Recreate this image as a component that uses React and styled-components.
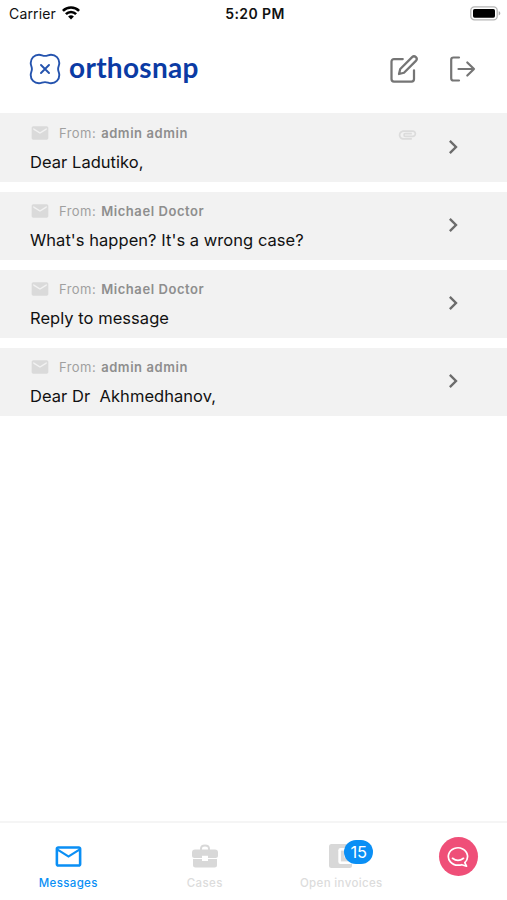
import React from 'react'
import styled, { createGlobalStyle } from 'styled-components'
import { FiEdit } from 'react-icons/fi'
import { MdEmail, MdMailOutline, MdChevronRight, MdAttachment } from 'react-icons/md'

const messages = [
  { id: 1, from: 'admin admin', subject: 'Dear Ladutiko,', attachment: true },
  { id: 2, from: 'Michael Doctor', subject: "What's happen? It's a wrong case?" },
  { id: 3, from: 'Michael Doctor', subject: 'Reply to message' },
  { id: 4, from: 'admin admin', subject: 'Dear Dr  Akhmedhanov,' },
]

const WifiIcon = () => (
  <svg width="18" height="14" viewBox="0 0 18 14" fill="none" stroke="#000" strokeWidth="2.6">
    <path d="M0.9 4.9a11.5 11.5 0 0 1 16.2 0" />
    <path d="M3.9 8.1a7.2 7.2 0 0 1 10.2 0" />
    <path d="M9 13.6 6.1 10.6a4.1 4.1 0 0 1 5.8 0z" fill="#000" stroke="none" />
  </svg>
)

const BatteryIcon = () => (
  <svg width="31" height="15" viewBox="0 0 31 15">
    <rect x="0.8" y="0.8" width="26.4" height="13" rx="3.6" fill="#fff" stroke="#b5b5b5" strokeWidth="1.3" />
    <rect x="3" y="2.9" width="22" height="8.8" rx="1.6" fill="#000" />
    <path d="M28.7 5.2v4.2c1-.4 1.6-1.2 1.6-2.1s-.6-1.7-1.6-2.1z" fill="#aaa" />
  </svg>
)

const LogoMark = () => (
  <svg width="32" height="32" viewBox="0 0 32 32" fill="none" stroke="#2453ae" strokeLinecap="round">
    <path
      d="M10 1.7C12.500 1.7 13.500 2.900 16 2.900S19.500 1.7 22 1.7C26.8 1.7 30.3 5.200 30.3 10C30.3 12.500 29.100 13.500 29.100 16S30.3 19.500 30.3 22C30.3 26.8 26.8 30.3 22 30.3C19.500 30.3 18.500 29.100 16 29.100S12.500 30.3 10 30.3C5.200 30.3 1.7 26.8 1.7 22C1.7 19.500 2.900 18.500 2.900 16S1.7 12.500 1.7 10C1.7 5.200 5.200 1.7 10 1.7Z"
      strokeWidth="1.9"
    />
    <path d="M12 12 20 20M20 12 12 20" strokeWidth="1.9" />
  </svg>
)

const LogoutIcon = () => (
  <svg width="28" height="28" viewBox="0 0 28 28" fill="none" stroke="#757575" strokeWidth="2.2" strokeLinecap="round" strokeLinejoin="round">
    <path d="M11 2.5H5.5Q3.2 2.5 3.2 4.8V23.2Q3.2 25.5 5.5 25.5H11" />
    <path d="M10.5 14H26M19.3 7.5 26 14 19.3 20.5" />
  </svg>
)

const BriefcaseIcon = () => (
  <svg width="26" height="24" viewBox="0 0 26 24" fill="#d8d8d8">
    <path d="M8 5.5V4.8Q8 .4 13 .4T18 4.8V5.5H23Q26 5.5 26 8.5V11.5Q26 14 23.5 14H16V11.8H10V14H2.5Q0 14 0 11.5V8.5Q0 5.5 3 5.5ZM10 5.5H16V4.9Q16 2.6 13 2.6T10 4.9Z" />
    <path d="M1 14.9H10V17H16V14.9H25V21Q25 23.5 22.5 23.5H3.5Q1 23.5 1 21Z" />
  </svg>
)

const WalletIcon = () => (
  <svg width="24" height="24" viewBox="0 0 24 24">
    <rect width="23" height="24" rx="2.5" fill="#d8d8d8" />
    <rect x="9.3" y="4" width="15" height="16" rx="2.2" fill="#fff" />
    <rect x="11.9" y="6.6" width="12" height="10.8" fill="#d8d8d8" />
    <circle cx="17" cy="12" r="2" fill="#fff" />
  </svg>
)

const ChatIcon = () => (
  <svg width="24" height="22" viewBox="0 0 24 22" fill="none" stroke="#fff" strokeWidth="1.7" strokeLinecap="round" strokeLinejoin="round">
    <path d="M18.8 16.6A9.6 8.7 0 1 0 12 19.2Q14 19.3 15.8 18.7L20.5 20.2Z" />
    <path d="M6.5 12.3Q12 16.5 17.5 12.3" />
  </svg>
)

const MessageRow = ({ message }) => (
  <Row>
    <RowBody>
      <Sender>
        <MdEmail size={ 20 } color="#dadada" />
        <From>From:</From>
        <Name>{ message.from }</Name>
      </Sender>
      <Subject>{ message.subject }</Subject>
    </RowBody>
    <Clip>{ message.attachment && <MdAttachment size={ 21 } /> }</Clip>
    <MdChevronRight size={ 28 } color="#6c6c6c" />
  </Row>
)

const App = () => (
  <Screen>
    <GlobalStyle />
    <StatusBar>
      <Carrier>
        <span>Carrier</span>
        <WifiIcon />
      </Carrier>
      <Clock>5:20 PM</Clock>
      <Battery><BatteryIcon /></Battery>
    </StatusBar>
    <Header>
      <LogoMark />
      <Wordmark>orthosnap</Wordmark>
      <Actions>
        <FiEdit size={ 30 } color="#757575" strokeWidth={ 1.8 } />
        <LogoutIcon />
      </Actions>
    </Header>
    <List>
      { messages.map((message) => <MessageRow key={ message.id } message={ message } />) }
    </List>
    <TabBar>
      <Tab $active>
        <IconBox><MdMailOutline size={ 31 } /></IconBox>
        <TabLabel>Messages</TabLabel>
      </Tab>
      <Tab>
        <IconBox><BriefcaseIcon /></IconBox>
        <TabLabel>Cases</TabLabel>
      </Tab>
      <Tab>
        <IconBox>
          <WalletIcon />
          <Badge>15</Badge>
        </IconBox>
        <TabLabel>Open invoices</TabLabel>
      </Tab>
      <ChatButton><ChatIcon /></ChatButton>
    </TabBar>
  </Screen>
)

const GlobalStyle = createGlobalStyle`
  body {
    margin: 0;
    background: #fff;
    font-family: Inter, "Liberation Sans", sans-serif;
  }
  svg {
    display: block;
    flex-shrink: 0;
  }
`

const Screen = styled.div`
  display: flex;
  flex-direction: column;
  width: 507px;
  height: 900px;
  overflow: hidden;
  background: #fff;
`

const StatusBar = styled.div`
  display: grid;
  grid-template-columns: 1fr auto 1fr;
  align-items: center;
  box-sizing: border-box;
  height: 28px;
  padding: 0 6px 2px 9px;
  font-size: 14px;
  color: #111;
`

const Carrier = styled.div`
  display: flex;
  align-items: center;
  gap: 6px;
  letter-spacing: 0.15px;
`

const Clock = styled.div`
  font-weight: 600;
  letter-spacing: 0.4px;
`

const Battery = styled.div`
  display: flex;
  justify-content: flex-end;
`

const Header = styled.header`
  display: flex;
  align-items: center;
  box-sizing: border-box;
  height: 85px;
  padding: 0 31px 3px 29px;
`

const Wordmark = styled.div`
  margin: -4px 0 0 8px;
  font-family: Lato, sans-serif;
  font-size: 28px;
  font-weight: 700;
  line-height: 32px;
  letter-spacing: 0.3px;
  color: #0b3ba4;
`

const Actions = styled.div`
  display: flex;
  align-items: center;
  gap: 29px;
  margin-left: auto;
`

const List = styled.main`
  display: flex;
  flex-direction: column;
  gap: 10px;
  flex: 1;
`

const Row = styled.div`
  display: flex;
  align-items: center;
  box-sizing: border-box;
  height: 68px;
  padding: 0 40px 2px 30px;
  background: #f2f2f2;
  &:first-child {
    height: 69px;
    padding-bottom: 1px;
  }
`

const RowBody = styled.div`
  flex: 1;
  padding-top: 2px;
  ${Row}:first-child & {
    padding-top: 3px;
  }
`

const Sender = styled.div`
  display: flex;
  align-items: center;
  height: 20px;
  font-size: 13px;
  color: #a0a0a0;
`

const From = styled.span`
  margin-left: 9px;
  letter-spacing: 0.45px;
`

const Name = styled.span`
  margin-left: 5px;
  font-weight: 600;
  letter-spacing: 0.57px;
  color: #8e8e8e;
`

const Subject = styled.div`
  margin-top: 7px;
  font-size: 16.5px;
  line-height: 24px;
  letter-spacing: 0.04px;
  white-space: pre;
  color: #111;
`

const Clip = styled.div`
  width: 42px;
  height: 47px;
  color: #dcdcdc;
`

const TabBar = styled.nav`
  display: flex;
  box-sizing: border-box;
  height: 79px;
  padding: 14px 0 0;
  border-top: 2px solid #f5f5f5;
`

const Tab = styled.div`
  display: flex;
  flex-direction: column;
  align-items: center;
  width: 136.5px;
  color: ${(props) => props.$active ? '#0a8ff5' : '#dcdcdc'};
`

const IconBox = styled.div`
  position: relative;
  display: flex;
  align-items: center;
  justify-content: center;
  height: 38px;
`

const TabLabel = styled.div`
  font-size: 11.5px;
  font-weight: 500;
  line-height: 16px;
  letter-spacing: 0.35px;
`

const Badge = styled.div`
  position: absolute;
  top: 3px;
  left: 15px;
  width: 29px;
  height: 24px;
  border-radius: 12px;
  background: #0a8ff5;
  color: #fff;
  font-size: 16.5px;
  line-height: 24px;
  text-align: center;
`

const ChatButton = styled.div`
  display: flex;
  align-items: center;
  justify-content: center;
  width: 39px;
  height: 39px;
  margin-left: 29px;
  border-radius: 50%;
  background: #ef4f78;
`

export default App
